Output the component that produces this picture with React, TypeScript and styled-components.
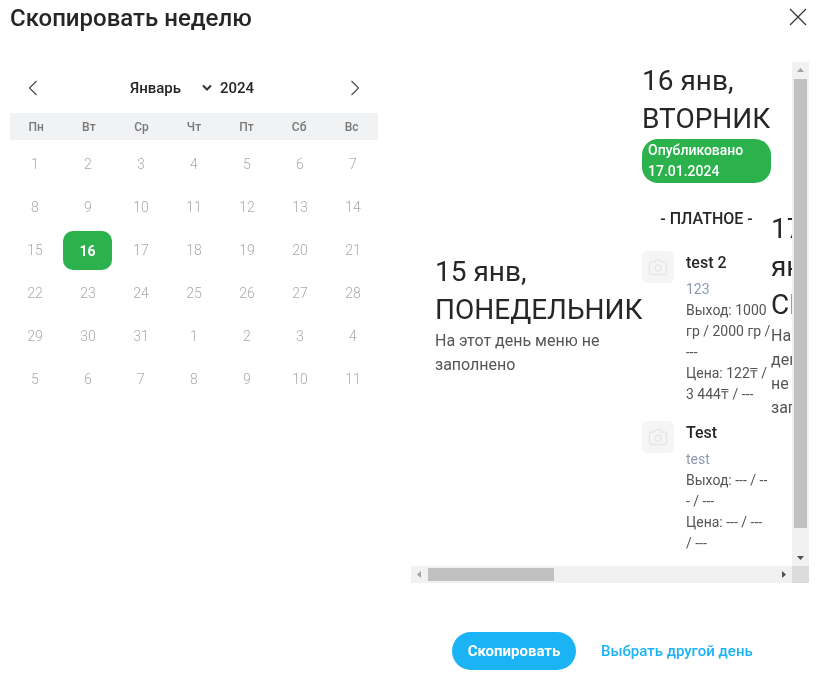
import React from "react";
import styled, { createGlobalStyle } from "styled-components";

const GlobalStyle = createGlobalStyle`
  html, body {
    margin: 0;
    padding: 0;
    background: #ffffff;
    font-family: Roboto, "Liberation Sans", sans-serif;
    color: #333333;
  }
  * {
    box-sizing: border-box;
  }
`;

const Modal = styled.div`
  width: 825px;
  height: 678px;
  padding: 0 16px 0 10px;
  overflow: hidden;
  will-change: transform;
`;

const Header = styled.div`
  align-items: center;
  display: flex;
  height: 35px;
  justify-content: space-between;
`;

const Title = styled.h2`
  color: #262626;
  font-size: 24px;
  font-weight: 500;
  margin: 0;
`;

const CloseButton = styled.button`
  background: none;
  border: 0;
  display: flex;
  margin: 0 2px 1px 0;
  padding: 0;
`;

const Body = styled.div`
  display: flex;
  gap: 33px;
  margin-top: 27px;
`;

const Calendar = styled.div`
  flex: none;
  padding-top: 1px;
  width: 368px;
`;

const CalendarNav = styled.div`
  align-items: center;
  display: flex;
  height: 50px;
  justify-content: space-between;
  padding: 0 17px;
`;

const NavButton = styled.button`
  background: none;
  border: 0;
  display: flex;
  padding: 0;
`;

const MonthPicker = styled.div`
  align-items: center;
  color: #262626;
  display: flex;
  font-size: 15px;
  font-weight: 500;
  margin-right: 4px;
`;

const MonthName = styled.span`
  width: 71px;
`;

const YearName = styled.span`
  margin-left: 7px;
`;

const WeekRow = styled.div`
  background: #f1f2f4;
  display: grid;
  grid-template-columns: repeat(7, 1fr);
  height: 27px;
`;

const WeekDay = styled.div`
  align-items: center;
  color: #787878;
  display: flex;
  font-size: 12px;
  font-weight: 500;
  justify-content: center;
`;

const DayGrid = styled.div`
  display: grid;
  gap: 4px;
  grid-template-columns: repeat(7, 49px);
  grid-auto-rows: 39px;
  margin-top: 5px;
`;

const Day = styled.div<{ $selected?: boolean }>`
  align-items: center;
  background: ${(p) => (p.$selected ? "#2bb24c" : "transparent")};
  border-radius: ${(p) => (p.$selected ? "10px" : "0")};
  color: ${(p) => (p.$selected ? "#ffffff" : "#aaaaaa")};
  display: flex;
  font-size: 14px;
  font-weight: ${(p) => (p.$selected ? 700 : 300)};
  justify-content: center;
  padding: ${(p) => (p.$selected ? "0" : "0 0 1px 1px")};
`;

const WeekPanel = styled.div`
  display: grid;
  flex: none;
  grid-template-columns: 1fr 17px;
  grid-template-rows: 1fr 17px;
  height: 521px;
  width: 398px;
`;

const WeekViewport = styled.div`
  min-width: 0;
  overflow: hidden;
`;

const ScrollBar = styled.div<{ $vertical?: boolean }>`
  background: #f1f1f1;
  display: flex;
  flex-direction: ${(p) => (p.$vertical ? "column" : "row")};
`;

const ScrollArrow = styled.div`
  align-items: center;
  display: flex;
  flex: none;
  height: 17px;
  justify-content: center;
  width: 17px;
`;

const ScrollTrack = styled.div`
  flex: 1;
`;

const ScrollThumb = styled.div<{ $vertical?: boolean }>`
  background: #c1c1c1;
  height: ${(p) => (p.$vertical ? "449px" : "13px")};
  margin: ${(p) => (p.$vertical ? "0 2px" : "2px 0")};
  width: ${(p) => (p.$vertical ? "13px" : "126px")};
`;

const ScrollCorner = styled.div`
  background: #dcdcdc;
`;

const Columns = styled.div`
  align-items: center;
  display: flex;
  padding-left: 24px;
  width: max-content;
`;

const DayColumn = styled.div<{ $width?: number; $empty?: boolean }>`
  flex: none;
  padding-top: ${(p) => (p.$empty ? "2px" : "0")};
  width: ${(p) => (p.$width ? `${p.$width}px` : "min-content")};
`;

const DayTitle = styled.div`
  color: #262626;
  font-size: 28px;
  font-weight: 400;
  line-height: 38px;
`;

const EmptyText = styled.div`
  color: #555555;
  font-size: 16px;
  font-weight: 400;
  line-height: 24px;
`;

const Badge = styled.div`
  background: #2bb24c;
  border-radius: 16px;
  color: #ffffff;
  font-size: 14px;
  font-weight: 500;
  line-height: 21px;
  margin-top: 1px;
  padding: 1px 6px;
`;

const SectionLabel = styled.div`
  color: #262626;
  font-size: 16px;
  font-weight: 500;
  line-height: 24px;
  margin: 24px 0 20px;
  text-align: center;
`;

const Dish = styled.div`
  display: flex;
  gap: 12px;
  margin-bottom: 16px;

  &:last-child {
    margin-bottom: 12px;
  }
`;

const DishPhoto = styled.div`
  align-items: center;
  background: #f5f5f5;
  border-radius: 6px;
  display: flex;
  flex: none;
  height: 32px;
  justify-content: center;
  width: 32px;
`;

const DishInfo = styled.div`
  flex: 1;
  min-width: 0;
`;

const DishName = styled.div`
  color: #262626;
  font-size: 16px;
  font-weight: 500;
  line-height: 24px;
  margin-bottom: 4px;
`;

const DishDescription = styled.div`
  color: #8c9ab0;
  font-size: 14px;
  line-height: 21px;
`;

const DishMeta = styled.div`
  color: #555555;
  font-size: 14px;
  line-height: 21px;
`;

const Footer = styled.div`
  align-items: center;
  display: flex;
  gap: 25px;
  margin-top: 49px;
  padding-left: 442px;
`;

const PrimaryButton = styled.button`
  background: #1ab3f4;
  border: 0;
  border-radius: 19px;
  color: #ffffff;
  font-family: inherit;
  font-size: 15px;
  font-weight: 700;
  height: 38px;
  padding: 0;
  width: 124px;
`;

const LinkButton = styled.button`
  background: none;
  border: 0;
  color: #1ab3f4;
  font-family: inherit;
  font-size: 15px;
  font-weight: 500;
  padding: 0;
`;

const CameraIcon = () => (
  <svg width="20" height="18" viewBox="0 0 20 18" fill="none" stroke="#e6e6e6" strokeWidth="1.4">
    <path d="M3.500 4h3l1.500-2.400h4l1.500 2.400h3a2 2 0 0 1 2 2v8.500a2 2 0 0 1-2 2h-13a2 2 0 0 1-2-2V6a2 2 0 0 1 2-2z" />
    <circle cx="10" cy="10" r="3" />
  </svg>
);

const Triangle = ({ points, fill }: { points: string; fill: string }) => (
  <svg width="9" height="9" viewBox="0 0 9 9">
    <polygon points={points} fill={fill} />
  </svg>
);

const weekDays = ["Пн", "Вт", "Ср", "Чт", "Пт", "Сб", "Вс"];

const days = [
  ...Array.from({ length: 31 }, (_, i) => i + 1),
  ...Array.from({ length: 11 }, (_, i) => i + 1),
];

const emptyDays = [
  "17 янв, СРЕДА",
  "18 янв, ЧЕТВЕРГ",
  "19 янв, ПЯТНИЦА",
  "20 янв, СУББОТА",
  "21 янв, ВОСКРЕСЕНЬЕ",
];

const App = () => {
  return (
    <Modal>
      <GlobalStyle />
      <Header>
        <Title>Скопировать неделю</Title>
        <CloseButton>
          <svg width="18" height="18" viewBox="0 0 18 18" fill="none" stroke="#333333" strokeWidth="1.2">
            <path d="M1 1l16 16M17 1L1 17" />
          </svg>
        </CloseButton>
      </Header>
      <Body>
        <Calendar>
          <CalendarNav>
            <NavButton>
              <svg width="12" height="16" viewBox="0 0 12 16" fill="none" stroke="#444444" strokeWidth="1.1">
                <path d="M9.500 1L2.500 8l7 7" />
              </svg>
            </NavButton>
            <MonthPicker>
              <MonthName>Январь</MonthName>
              <svg width="12" height="8" viewBox="0 0 12 8" fill="none" stroke="#333333" strokeWidth="2">
                <path d="M2 1.500l4 4 4-4" />
              </svg>
              <YearName>2024</YearName>
            </MonthPicker>
            <NavButton>
              <svg width="12" height="16" viewBox="0 0 12 16" fill="none" stroke="#444444" strokeWidth="1.1">
                <path d="M2.500 1l7 7-7 7" />
              </svg>
            </NavButton>
          </CalendarNav>
          <WeekRow>
            {weekDays.map((d) => (
              <WeekDay key={d}>{d}</WeekDay>
            ))}
          </WeekRow>
          <DayGrid>
            {days.map((d, i) => (
              <Day key={i} $selected={i === 15}>
                {d}
              </Day>
            ))}
          </DayGrid>
        </Calendar>
        <WeekPanel>
          <WeekViewport>
            <Columns>
              <DayColumn $width={207} $empty>
                <DayTitle>15 янв, ПОНЕДЕЛЬНИК</DayTitle>
                <EmptyText>На этот день меню не заполнено</EmptyText>
              </DayColumn>
              <DayColumn $width={129}>
                <DayTitle>16 янв, ВТОРНИК</DayTitle>
                <Badge>Опубликовано 17.01.2024</Badge>
                <SectionLabel>- ПЛАТНОЕ -</SectionLabel>
                <Dish>
                  <DishPhoto>
                    <CameraIcon />
                  </DishPhoto>
                  <DishInfo>
                    <DishName>test 2</DishName>
                    <DishDescription>123</DishDescription>
                    <DishMeta>Выход: 1000 гр / 2000 гр / ---</DishMeta>
                    <DishMeta>Цена: 122₸ / 3 444₸ / ---</DishMeta>
                  </DishInfo>
                </Dish>
                <Dish>
                  <DishPhoto>
                    <CameraIcon />
                  </DishPhoto>
                  <DishInfo>
                    <DishName>Test</DishName>
                    <DishDescription>test</DishDescription>
                    <DishMeta>Выход: --- / --- / ---</DishMeta>
                    <DishMeta>Цена: --- / --- / ---</DishMeta>
                  </DishInfo>
                </Dish>
              </DayColumn>
              {emptyDays.map((title) => (
                <DayColumn key={title} $empty>
                  <DayTitle>{title}</DayTitle>
                  <EmptyText>На этот день меню не заполнено</EmptyText>
                </DayColumn>
              ))}
            </Columns>
          </WeekViewport>
          <ScrollBar $vertical>
            <ScrollArrow>
              <Triangle points="4.500,2 8,6 1,6" fill="#a3a3a3" />
            </ScrollArrow>
            <ScrollTrack>
              <ScrollThumb $vertical />
            </ScrollTrack>
            <ScrollArrow>
              <Triangle points="1,3 8,3 4.500,7" fill="#505050" />
            </ScrollArrow>
          </ScrollBar>
          <ScrollBar>
            <ScrollArrow>
              <Triangle points="2,4.500 6,1 6,8" fill="#a3a3a3" />
            </ScrollArrow>
            <ScrollTrack>
              <ScrollThumb />
            </ScrollTrack>
            <ScrollArrow>
              <Triangle points="3,1 7,4.500 3,8" fill="#505050" />
            </ScrollArrow>
          </ScrollBar>
          <ScrollCorner />
        </WeekPanel>
      </Body>
      <Footer>
        <PrimaryButton>Скопировать</PrimaryButton>
        <LinkButton>Выбрать другой день</LinkButton>
      </Footer>
    </Modal>
  );
};

export default App;
